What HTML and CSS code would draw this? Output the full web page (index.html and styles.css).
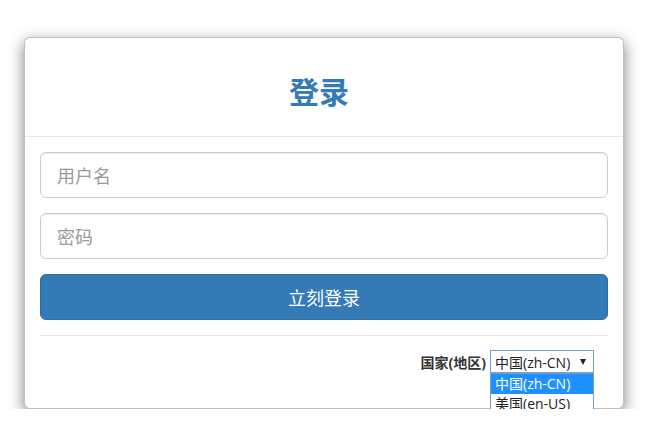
FILE: index.html
```html
<!DOCTYPE html>
<html lang="zh-CN">
<head>
<meta charset="utf-8">
<title>登录</title>
<link rel="stylesheet" href="styles.css">
</head>
<body>
<div class="card">
  <div class="card-header">
    <h2 class="title">登录</h2>
  </div>
  <div class="card-body">
    <div class="field"><span class="placeholder">用户名</span></div>
    <div class="field"><span class="placeholder">密码</span></div>
    <div class="btn">立刻登录</div>
    <div class="footer">
      <span class="label">国家(地区)</span>
      <div class="select-wrap">
        <div class="select"><span>中国(zh-CN)</span><span class="arrow"></span></div>
        <ul class="options">
          <li class="opt active">中国(zh-CN)</li>
          <li class="opt">美国(en-US)</li>
        </ul>
      </div>
    </div>
  </div>
</div>
</body>
</html>
```

FILE: styles.css
```css
* { box-sizing: border-box; }
html, body { margin: 0; padding: 0; background: #fff; }
body {
  font-family: "Microsoft YaHei", "Noto Sans CJK SC", "Liberation Sans", sans-serif;
  color: #333;
}
.card {
  margin: 37px 0 0 24px;
  width: 600px;
  height: 372px;
  border: 1px solid rgba(0,0,0,.25);
  border-radius: 6px;
  background: #fff;
  box-shadow: 0 5px 15px rgba(0,0,0,.5);
}
.card-header {
  padding: 36px 10px 29px 0;
  border-bottom: 1px solid #e5e5e5;
  text-align: center;
}
.title {
  margin: 0;
  font-size: 30px;
  line-height: 33px;
  font-weight: 700;
  color: #337ab7;
}
.card-body {
  padding: 15px 15px 0;
  display: flex;
  flex-direction: column;
  gap: 15px;
}
.field {
  height: 46px;
  border: 1px solid #ccc;
  border-radius: 6px;
  padding: 0 16px;
  display: flex;
  align-items: center;
  font-size: 18px;
  box-shadow: inset 0 1px 1px rgba(0,0,0,.075);
}
.placeholder { color: #999; }
.btn {
  height: 46px;
  border: 1px solid #2e6da4;
  border-radius: 6px;
  background: #337ab7;
  color: #fff;
  font-size: 18px;
  display: flex;
  align-items: center;
  justify-content: center;
}
.footer {
  border-top: 1px solid #e5e5e5;
  padding: 14px 14px 0 0;
  display: flex;
  justify-content: flex-end;
  align-items: center;
  gap: 4px;
  font-family: "Open Sans", "Noto Sans CJK SC", sans-serif;
}
.label {
  font-size: 14px;
  font-weight: 700;
  color: #333;
}
.select-wrap { position: relative; }
.select {
  width: 104px;
  height: 23px;
  border: 1px solid #7a9cc9;
  background: #fff;
  font-size: 14px;
  color: #222;
  display: flex;
  align-items: center;
  justify-content: space-between;
  padding: 0 7px 0 4px;
}
.arrow {
  width: 0;
  height: 0;
  border-left: 3.5px solid transparent;
  border-right: 3.5px solid transparent;
  border-top: 6px solid #222;
}
.options {
  position: absolute;
  left: 0;
  top: 23px;
  width: 104px;
  margin: 0;
  padding: 0;
  list-style: none;
  border: 1px solid #7a9cc9;
  background: #fff;
  z-index: 2;
}
.opt {
  height: 20px;
  line-height: 20px;
  padding: 0 4px;
  font-size: 14px;
  color: #222;
}
.opt.active { background: #1e90ff; color: #fff; }
```
